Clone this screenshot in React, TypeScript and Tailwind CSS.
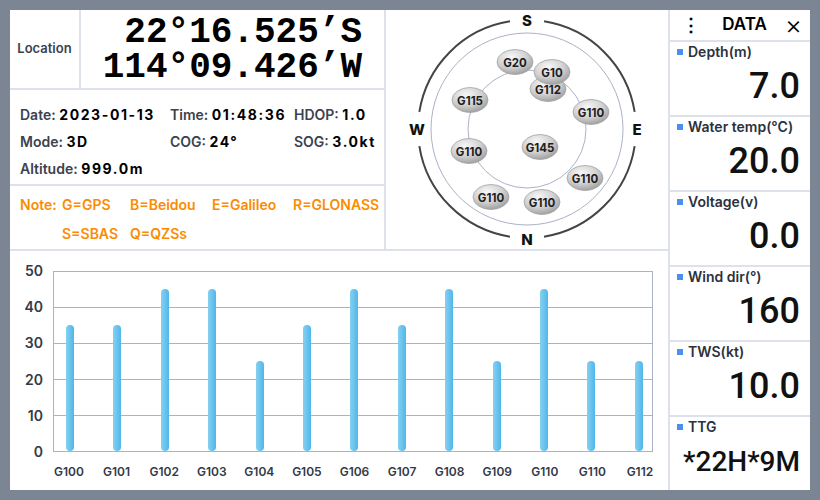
import React from "react"

const bars = [
  { name: "G100", value: 35 },
  { name: "G101", value: 35 },
  { name: "G102", value: 45 },
  { name: "G103", value: 45 },
  { name: "G104", value: 25 },
  { name: "G105", value: 35 },
  { name: "G106", value: 45 },
  { name: "G107", value: 35 },
  { name: "G108", value: 45 },
  { name: "G109", value: 25 },
  { name: "G110", value: 45 },
  { name: "G110", value: 25 },
  { name: "G112", value: 25 },
]

const sats = [
  { name: "G20", x: 129, y: 52 },
  { name: "G112", x: 162, y: 79 },
  { name: "G10", x: 166, y: 62 },
  { name: "G115", x: 84, y: 90 },
  { name: "G110", x: 205, y: 102 },
  { name: "G110", x: 83, y: 141 },
  { name: "G145", x: 154, y: 137 },
  { name: "G110", x: 199, y: 168 },
  { name: "G110", x: 105, y: 187 },
  { name: "G110", x: 156, y: 192 },
]

const readings = [
  { label: "Depth(m)", value: "7.0" },
  { label: "Water temp(°C)", value: "20.0" },
  { label: "Voltage(v)", value: "0.0" },
  { label: "Wind dir(°)", value: "160" },
  { label: "TWS(kt)", value: "10.0" },
]

function arc(cx: number, cy: number, r: number, a1: number, a2: number) {
  const p = (a: number) => {
    const t = (a * Math.PI) / 180
    return `${(cx + r * Math.sin(t)).toFixed(2)} ${(cy - r * Math.cos(t)).toFixed(2)}`
  }
  return `M ${p(a1)} A ${r} ${r} 0 0 1 ${p(a2)}`
}

function SkyPlot() {
  const cx = 141
  const cy = 119
  return (
    <svg width="282" height="239" viewBox="0 0 282 239">
      <defs>
        <radialGradient id="sat" cx="40%" cy="30%" r="75%">
          <stop offset="0" stopColor="#f7f7f7" />
          <stop offset="0.55" stopColor="#d2d2d2" />
          <stop offset="1" stopColor="#9a9a9a" />
        </radialGradient>
      </defs>
      {[0, 90, 180, 270].map((a) => (
        <path key={a} d={arc(cx, cy, 109, a + 9, a + 81)} fill="none" stroke="#444" strokeWidth="2" />
      ))}
      <circle cx={cx} cy={cy} r="96" fill="none" stroke="#aab2c6" strokeWidth="1" />
      <circle cx={cx} cy={cy} r="59" fill="none" stroke="#aab2c6" strokeWidth="1" />
      <g fontFamily="Inter, sans-serif" fontWeight="800" fontSize="15" fill="#111" textAnchor="middle" dominantBaseline="central">
        <text x={cx} y="10">S</text>
        <text x={cx} y="229">N</text>
        <text x="31" y={cy}>W</text>
        <text x="251" y={cy}>E</text>
      </g>
      {sats.map((s, i) => (
        <g key={i}>
          <ellipse cx={s.x} cy={s.y} rx="18" ry="12.5" fill="url(#sat)" stroke="#a3a3a3" strokeWidth="0.8" />
          <text
            x={s.x}
            y={s.y + 0.5}
            textAnchor="middle"
            dominantBaseline="central"
            fontFamily="Inter, sans-serif"
            fontWeight="700"
            fontSize="11.5"
            fill="#1e1e1e"
          >
            {s.name}
          </text>
        </g>
      ))}
    </svg>
  )
}

function Info({ label, value }: { label: string; value: string }) {
  return (
    <div className="whitespace-nowrap">
      <span className="font-semibold text-[#3b4250]">{label} </span>
      <span className="font-bold text-black tracking-[1.6px]">{value}</span>
    </div>
  )
}

function Chart() {
  return (
    <div className="bg-white pt-[20px] flex">
      {/* y axis */}
      <div className="w-[33px] h-[197px] -mt-[8px] flex flex-col justify-between items-end text-[14px] leading-[16px] font-semibold text-[#333a47]">
        {[50, 40, 30, 20, 10, 0].map((n) => (
          <span key={n}>{n}</span>
        ))}
      </div>
      <div className="ml-[10px] w-[600px]">
        <div className="relative h-[181px] border border-[#a9b3c7]">
          {[0, 1, 2, 3].map((i) => (
            <div key={i} className="h-[36px] border-b border-[#a9b3c7]" />
          ))}
          <div className="absolute inset-0 flex items-end justify-between pl-[12px] pr-[9px]">
            {bars.map((b, i) => (
              <div
                key={i}
                className="w-[8px] rounded-full bg-gradient-to-r from-[#86d0f0] to-[#4db7ea]"
                style={{ height: b.value * 3.6 }}
              />
            ))}
          </div>
        </div>
        <div className="mt-[13px] flex justify-between pl-[12px] pr-[9px] text-[12px] leading-[14px] font-semibold text-[#333a47]">
          {bars.map((b, i) => (
            <div key={i} className="w-[8px] flex justify-center">
              <span className="whitespace-nowrap">{b.name}</span>
            </div>
          ))}
        </div>
      </div>
    </div>
  )
}

export default function App() {
  return (
    <div className="w-[820px] h-[500px] bg-[#7b8594] p-[10px] font-['Inter',sans-serif]">
      <div className="w-[800px] h-[480px] bg-[#dde1eb] flex gap-[2px]">
        {/* main */}
        <div className="w-[658px] grid grid-rows-[239px_239px] gap-[2px]">
          <div className="flex gap-[2px]">
            <div className="w-[374px] grid grid-rows-[78px_94px_63px] gap-[2px]">
              <div className="flex gap-[2px]">
                <div className="w-[69px] bg-white flex items-center justify-center text-[13px] font-semibold text-[#3b4250]">
                  Location
                </div>
                <div className="flex-1 bg-white flex items-center justify-end pr-[22px] pt-[1px]">
                  <p className="text-right font-['Liberation_Mono',monospace] font-bold text-[36px] leading-[35px] text-black">
                    22°16.525’S
                    <br />
                    114°09.426’W
                  </p>
                </div>
              </div>
              <div className="bg-white pl-[10px] pt-[11px] grid grid-cols-[150px_124px_1fr] auto-rows-[27px] text-[14px] leading-[27px]">
                <Info label="Date:" value="2023-01-13" />
                <Info label="Time:" value="01:48:36" />
                <Info label="HDOP:" value="1.0" />
                <Info label="Mode:" value="3D" />
                <Info label="COG:" value="24°" />
                <Info label="SOG:" value="3.0kt" />
                <Info label="Altitude:" value="999.0m" />
              </div>
              <div className="bg-white pl-[10px] pt-[6px] flex text-[14px] leading-[25px] font-semibold text-[#fb8c00]">
                <span className="w-[42px]">Note:</span>
                <div className="grid grid-cols-[68px_82px_81px_auto]">
                  <span>G=GPS</span>
                  <span>B=Beidou</span>
                  <span>E=Galileo</span>
                  <span>R=GLONASS</span>
                  <span>S=SBAS</span>
                  <span>Q=QZSs</span>
                </div>
              </div>
            </div>
            <div className="flex-1 bg-white">
              <SkyPlot />
            </div>
          </div>
          <Chart />
        </div>

        {/* data panel */}
        <div className="w-[140px] grid grid-rows-[30px_repeat(6,1fr)] gap-[2px]">
          <div className="bg-white flex items-center justify-between pl-[12px] pr-[8px] text-black">
            <span className="text-[18px] font-bold leading-none">⋮</span>
            <span className="text-[17px] font-semibold pl-[4px]">DATA</span>
            <span className="text-[26px] font-light leading-none">×</span>
          </div>
          {readings.map((r) => (
            <div key={r.label} className="bg-white flex flex-col justify-between pl-[7px] pr-[10px] pt-[1px] pb-[11px]">
              <div className="flex items-center gap-[5px] leading-[18px]">
                <span className="w-[6px] h-[6px] bg-[#4a90f0]" />
                <span className="text-[14px] font-semibold text-[#2b313d] whitespace-nowrap">{r.label}</span>
              </div>
              <div className="text-right font-['Roboto',sans-serif] font-medium text-[36px] leading-none text-[#111]">
                {r.value}
              </div>
            </div>
          ))}
          <div className="bg-white flex flex-col justify-between pl-[7px] pr-[10px] pt-[1px] pb-[14px]">
            <div className="flex items-center gap-[5px] leading-[18px]">
              <span className="w-[6px] h-[6px] bg-[#4a90f0]" />
              <span className="text-[14px] font-semibold text-[#2b313d]">TTG</span>
            </div>
            <div className="text-right font-['Roboto',sans-serif] font-medium text-[28px] leading-none text-[#111]">
              *22H*9M
            </div>
          </div>
        </div>
      </div>
    </div>
  )
}
